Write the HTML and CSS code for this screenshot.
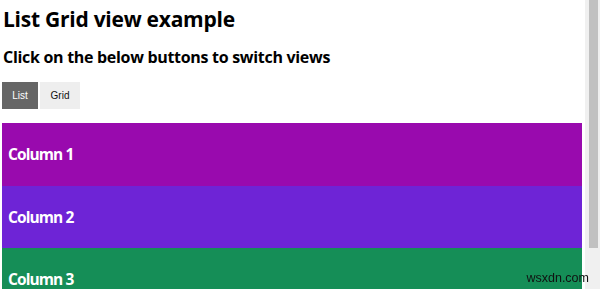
FILE: index.html
```html
<!DOCTYPE html>
<html lang="en">

<head>
  <meta charset="UTF-8">
  <meta name="viewport" content="width=device-width, initial-scale=1.0">
  <title>List Grid view example</title>
  <link rel="stylesheet" href="styles.css">
</head>

<body>
  <div class="page">
    <h1 class="page-title">List Grid view example</h1>
    <h2 class="page-subtitle">Click on the below buttons to switch views</h2>
    <div class="view-buttons">
      <button class="btn active">List</button>
      <button class="btn">Grid</button>
    </div>
    <div class="columns">
      <div class="column column-1">
        <h2>Column 1</h2>
      </div>
      <div class="column column-2">
        <h2>Column 2</h2>
      </div>
      <div class="column column-3">
        <h2>Column 3</h2>
      </div>
    </div>
  </div>
  <!-- window scrollbar, as it showed in the screenshot -->
  <div class="scrollbar">
    <div class="scrollbar-thumb"></div>
  </div>
  <div class="watermark">wsxdn.com</div>
</body>

</html>
```

FILE: styles.css
```css
body {
  display: flex;
  flex-direction: row;
  height: 100vh;
  overflow: hidden;
  margin: 0;
  font-family: "Open Sans", "Noto Sans", sans-serif;
  color: #000;
  background: #fff;
}

.page {
  flex: 1;
  min-width: 0;
  padding: 0 3px 0 2px;
}

.scrollbar {
  width: 15px;
  flex-shrink: 0;
  background: #f0f0f0;
  display: flex;
  flex-direction: column;
  padding: 0 2px 0 4px;
  box-sizing: border-box;
}

.scrollbar-thumb {
  height: 248px;
  background: #c1c1c1;
}

.watermark {
  position: fixed;
  right: 11px;
  top: 271px;
  font-family: "Liberation Sans", Arial, sans-serif;
  font-size: 12.5px;
  line-height: 14px;
  color: #111;
  pointer-events: none;
}

.page-title {
  font-size: 21px;
  font-weight: 700;
  letter-spacing: -0.25px;
  margin: 0;
  padding: 4px 0 0 1px;
  line-height: 30px;
}

.page-subtitle {
  font-size: 16px;
  font-weight: 700;
  letter-spacing: -0.3px;
  margin: 0;
  padding: 12px 0 0 1px;
  line-height: 22px;
}

.view-buttons {
  display: flex;
  gap: 2px;
  margin-top: 14px;
  margin-bottom: 14px;
}

.btn {
  border: none;
  outline: none;
  width: 40px;
  height: 27px;
  padding: 0;
  font-family: "Liberation Sans", Arial, sans-serif;
  font-size: 10px;
  background: #eeeeee;
  color: #111;
  cursor: pointer;
}

.btn.active {
  width: 36px;
  background: #666666;
  color: #fff;
}

.column {
  height: 62.5px;
  display: flex;
  align-items: center;
  padding: 0 6px;
  color: #fff;
}

.column h2 {
  margin: 0;
  font-size: 15.5px;
  font-weight: 700;
  letter-spacing: -0.9px;
}

.column-1 {
  background: #990aae;
}

.column-2 {
  background: #6e24d6;
}

.column-3 {
  background: #158e57;
}
```
